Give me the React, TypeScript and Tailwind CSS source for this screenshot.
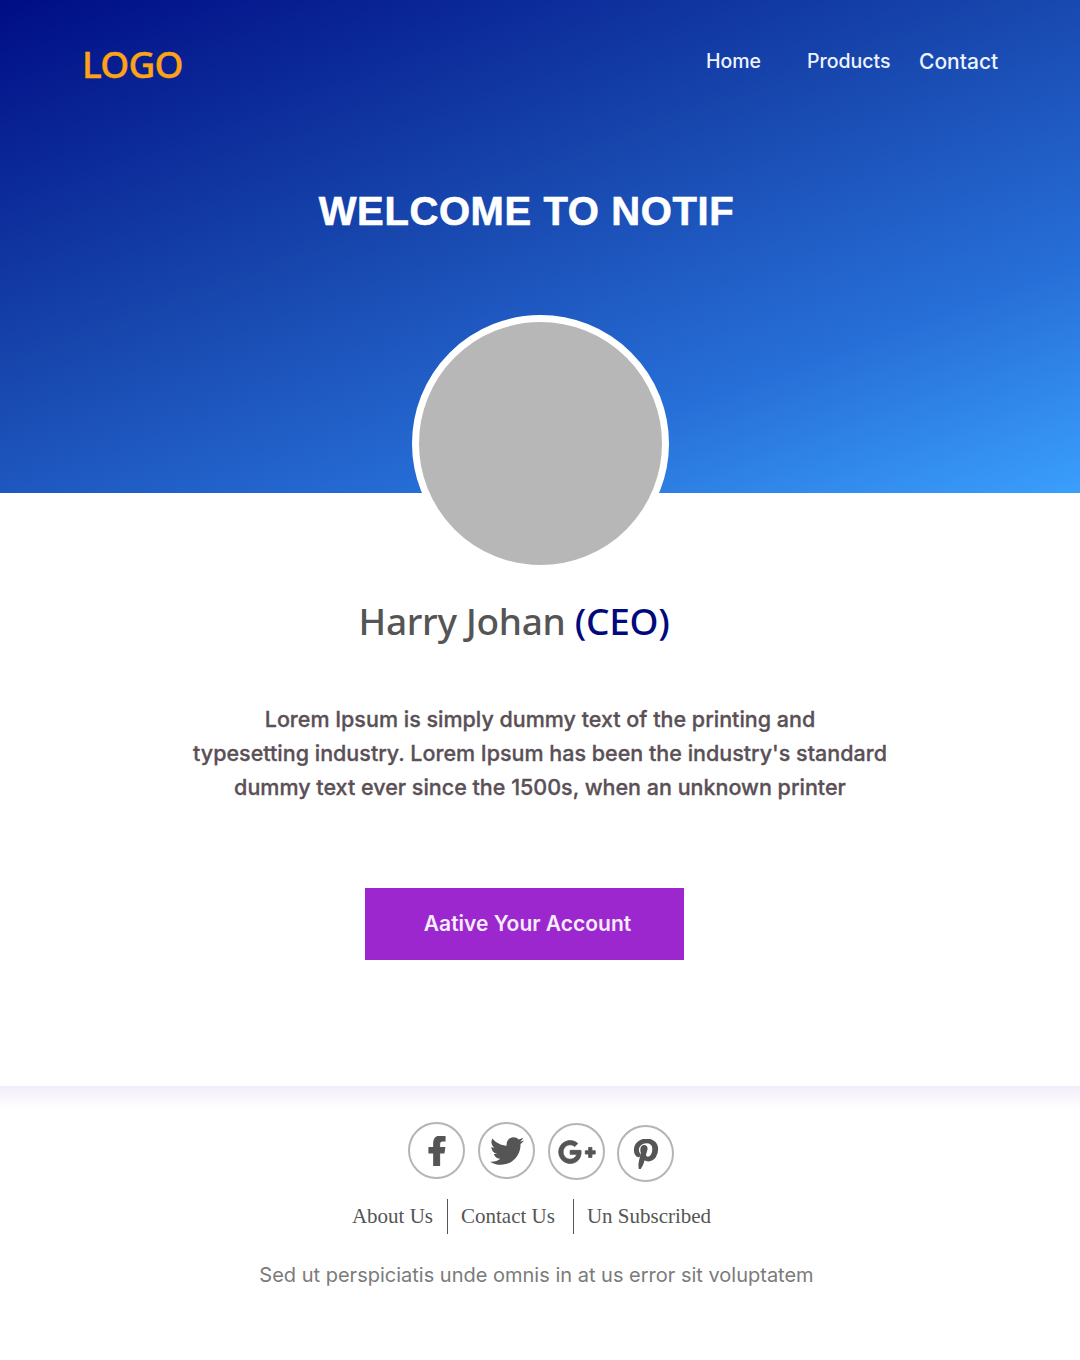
import { FaFacebookF, FaGooglePlusG, FaPinterestP, FaTwitter } from "react-icons/fa";

const poppins = "font-['Inter','Noto_Sans',sans-serif]";

function SocialIcon({ children, className }: { children: React.ReactNode; className?: string }) {
  return (
    <div className={`flex h-[57px] w-[57px] items-center justify-center rounded-full border-2 border-[#b5b5b5] text-[#555] ${className ?? ""}`}>
      {children}
    </div>
  );
}

export default function App() {
  return (
    <div className="min-h-[1360px] bg-white">
      {/* Hero */}
      <header className="h-[493px] bg-[linear-gradient(160deg,#000d85_0%,#1746ad_42%,#276fd8_74%,#3a9ffc_100%)]">
        <nav className="flex items-start justify-between pl-[82px] pr-[83px] pt-[39px]">
          <span className="font-['Noto_Sans',sans-serif] text-[37px] font-medium leading-[50px] tracking-[-0.8px] text-[#fda316] [-webkit-text-stroke:0.4px]">LOGO</span>
          <div className={`flex pt-[9px] text-[19.5px] font-medium leading-[26px] text-[#eef3ff] ${poppins}`}>
            <a className="w-[56px] whitespace-nowrap">Home</a>
            <a className="ml-[45px] w-[83px] whitespace-nowrap">Products</a>
            <a className="ml-[29px] mt-[1px] w-[78px] whitespace-nowrap text-[21px]">Contact</a>
          </div>
        </nav>
        <h1 className="mt-[94px] pr-[27px] text-center font-['Liberation_Sans',sans-serif] text-[40px] font-bold leading-[56px] tracking-[0.6px] text-white [-webkit-text-stroke:0.6px]">
          WELCOME TO NOTIF
        </h1>
      </header>

      {/* Avatar overlaps the hero */}
      <div className="-mt-[178px] flex justify-center pl-[1px]">
        <div className="relative h-[257px] w-[257px] rounded-full border-[7px] border-white bg-[#b7b7b7]" />
      </div>

      <main className="flex flex-col items-center">
        <h2 className="mt-[21px] pr-[52px] font-['Noto_Sans',sans-serif] text-[37px] font-medium leading-[56px] tracking-[-0.3px] text-[#555]">
          Harry Johan <span className="text-[#000a7c]">(CEO)</span>
        </h2>
        <p className={`mt-[53px] text-center text-[21.5px] font-medium leading-[34px] text-[#5a5056] [-webkit-text-stroke:0.3px] ${poppins}`}>
          Lorem Ipsum is simply dummy text of the printing and
          <br />
          typesetting industry. Lorem Ipsum has been the industry's standard
          <br />
          dummy text ever since the 1500s, when an unknown printer
        </p>
        <button className={`mt-[84px] mr-[31px] h-[72px] w-[319px] bg-[#9c27cf] pl-[6px] text-[21px] font-semibold text-[#f6ecfb] ${poppins}`}>
          Aative Your Account
        </button>
      </main>

      {/* Footer */}
      <footer className="mt-[126px] bg-[linear-gradient(#f3edfb_0px,#ffffff_24px)] pt-[36px]">
        <div className="flex justify-center gap-[13px] pl-[2px]">
          <SocialIcon><FaFacebookF size={30} className="stroke-[18]" /></SocialIcon>
          <SocialIcon><FaTwitter size={34} /></SocialIcon>
          <SocialIcon className="mt-[1px]"><FaGooglePlusG size={38} className="stroke-[14]" /></SocialIcon>
          <SocialIcon className="-ml-[1px] mt-[3px]"><FaPinterestP size={30} className="stroke-[30]" /></SocialIcon>
        </div>
        <div className="mt-[17px] flex justify-center pr-[17px] font-['Liberation_Serif',serif] text-[21px] leading-[35px] text-[#555]">
          <a className="pr-[14px]">About Us</a>
          <a className="border-l border-[#555] pl-[13px] pr-[18px]">Contact Us</a>
          <a className="border-l border-[#555] pl-[13px]">Un Subscribed</a>
        </div>
        <p className={`mt-[23px] pr-[7px] text-center text-[20px] leading-[36px] text-[#7b7b7b] ${poppins}`}>
          Sed ut perspiciatis unde omnis in at us error sit voluptatem
        </p>
      </footer>
    </div>
  );
}
